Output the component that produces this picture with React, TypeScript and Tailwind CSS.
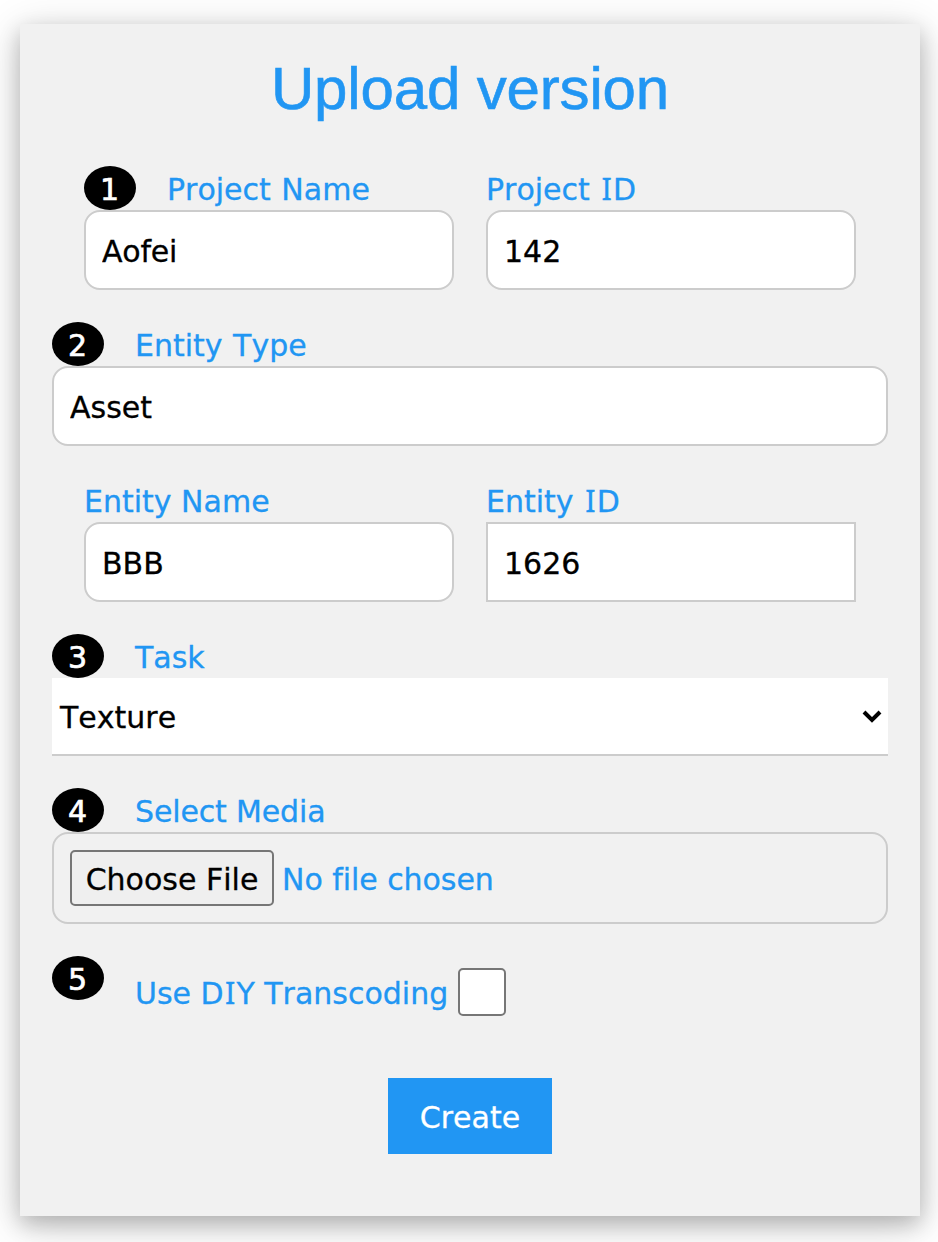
import type { ReactNode } from 'react';

const inputClass =
  'block h-20 w-full border-2 border-[#ccc] bg-white px-4 pt-0.5 text-[30px] text-black outline-none';

function Badge({ children }: { children: ReactNode }) {
  return (
    <span className="mr-[31px] flex h-11 w-[52px] shrink-0 items-center justify-center rounded-[50%] bg-black pt-1 pr-px text-white [-webkit-text-stroke:0.7px_white]">
      {children}
    </span>
  );
}

function SerifI() {
  return <span className="px-[1.2px] font-['Noto_Sans',sans-serif] text-[30.5px] leading-none">I</span>;
}

function Label({ step, spacing, children }: { step?: number; spacing: string; children: ReactNode }) {
  return (
    <div className="flex h-11 items-center whitespace-nowrap">
      {step !== undefined && <Badge>{step}</Badge>}
      <label className={'pt-1 ' + spacing}>{children}</label>
    </div>
  );
}

export default function App() {
  return (
    <main className="h-[1242px] w-[938px] overflow-hidden bg-white px-5 pt-6 font-['Verdana','DejaVu_Sans',sans-serif] text-[30px] leading-[40px] text-[#2196f3] [font-kerning:none] [font-variant-ligatures:none] [-webkit-text-stroke:0.3px]">
      <form
        className="h-[1192px] w-[900px] bg-[#f1f1f1] px-8 shadow-[0_8px_20px_0_rgba(0,0,0,0.2),0_8px_40px_0_rgba(0,0,0,0.19)]"
        onSubmit={(e) => e.preventDefault()}
      >
        <h2 className="h-[110px] pt-5 text-center font-['Liberation_Sans',Arial,sans-serif] text-[60px] leading-[90px] tracking-[-0.15px] [-webkit-text-stroke:0.6px]">
          Upload version
        </h2>

        <div className="mt-8 grid grid-cols-2 gap-8 px-8">
          <div>
            <Label step={1} spacing="[word-spacing:1px]">Project Name</Label>
            <input className={inputClass + ' rounded-2xl tracking-[-0.2px]'} defaultValue="Aofei" />
          </div>
          <div>
            <Label spacing="[word-spacing:1px]">
              Project <SerifI />D
            </Label>
            <input className={inputClass + ' rounded-2xl'} defaultValue="142" />
          </div>
        </div>

        <div className="mt-8">
          <Label step={2} spacing="[word-spacing:1px]">Entity Type</Label>
          <input className={inputClass + ' rounded-2xl'} defaultValue="Asset" />
        </div>

        <div className="mt-8 grid grid-cols-2 gap-8 px-8">
          <div>
            <Label spacing="tracking-normal">Entity Name</Label>
            <input className={inputClass + ' rounded-2xl'} defaultValue="BBB" />
          </div>
          <div>
            <Label spacing="[word-spacing:1px]">
              Entity <SerifI />D
            </Label>
            <input className={inputClass} defaultValue="1626" />
          </div>
        </div>

        <div className="mt-8">
          <Label step={3} spacing="tracking-normal">Task</Label>
          <div className="flex h-[78px] items-center justify-between border-b-2 border-[#ccc] bg-white pr-1.5 pl-2 text-black">
            <span className="pt-1">Texture</span>
            <svg width="20" height="14" viewBox="0 0 20 14" fill="none" stroke="#000" strokeWidth="4">
              <path d="M2 3 10 11 18 3" />
            </svg>
          </div>
        </div>

        <div className="mt-8">
          <Label step={4} spacing="tracking-[-0.15px]">Select Media</Label>
          <div className="flex h-[92px] items-center rounded-2xl border-2 border-[#ccc] px-4 whitespace-nowrap">
            <button
              type="button"
              className="h-14 w-[204px] rounded-[5px] border-2 border-[#767676] bg-[#efefef] pt-1 text-black"
            >
              Choose File
            </button>
            <span className="ml-2 pt-1 tracking-[-0.05px]">No file chosen</span>
          </div>
        </div>

        <div className="mt-8 flex h-[60px] whitespace-nowrap">
          <Badge>5</Badge>
          <label className="w-[313px] pt-[18px]">
            Use D<SerifI />Y Transcoding
          </label>
          <input
            type="checkbox"
            className="mt-3 ml-2.5 size-12 shrink-0 appearance-none rounded-[5px] border-2 border-[#767676] bg-white"
          />
        </div>

        <button type="submit" className="mx-auto mt-[62px] block h-[76px] w-[164px] bg-[#2196f3] pt-1 text-white">
          Create
        </button>
      </form>
    </main>
  );
}
